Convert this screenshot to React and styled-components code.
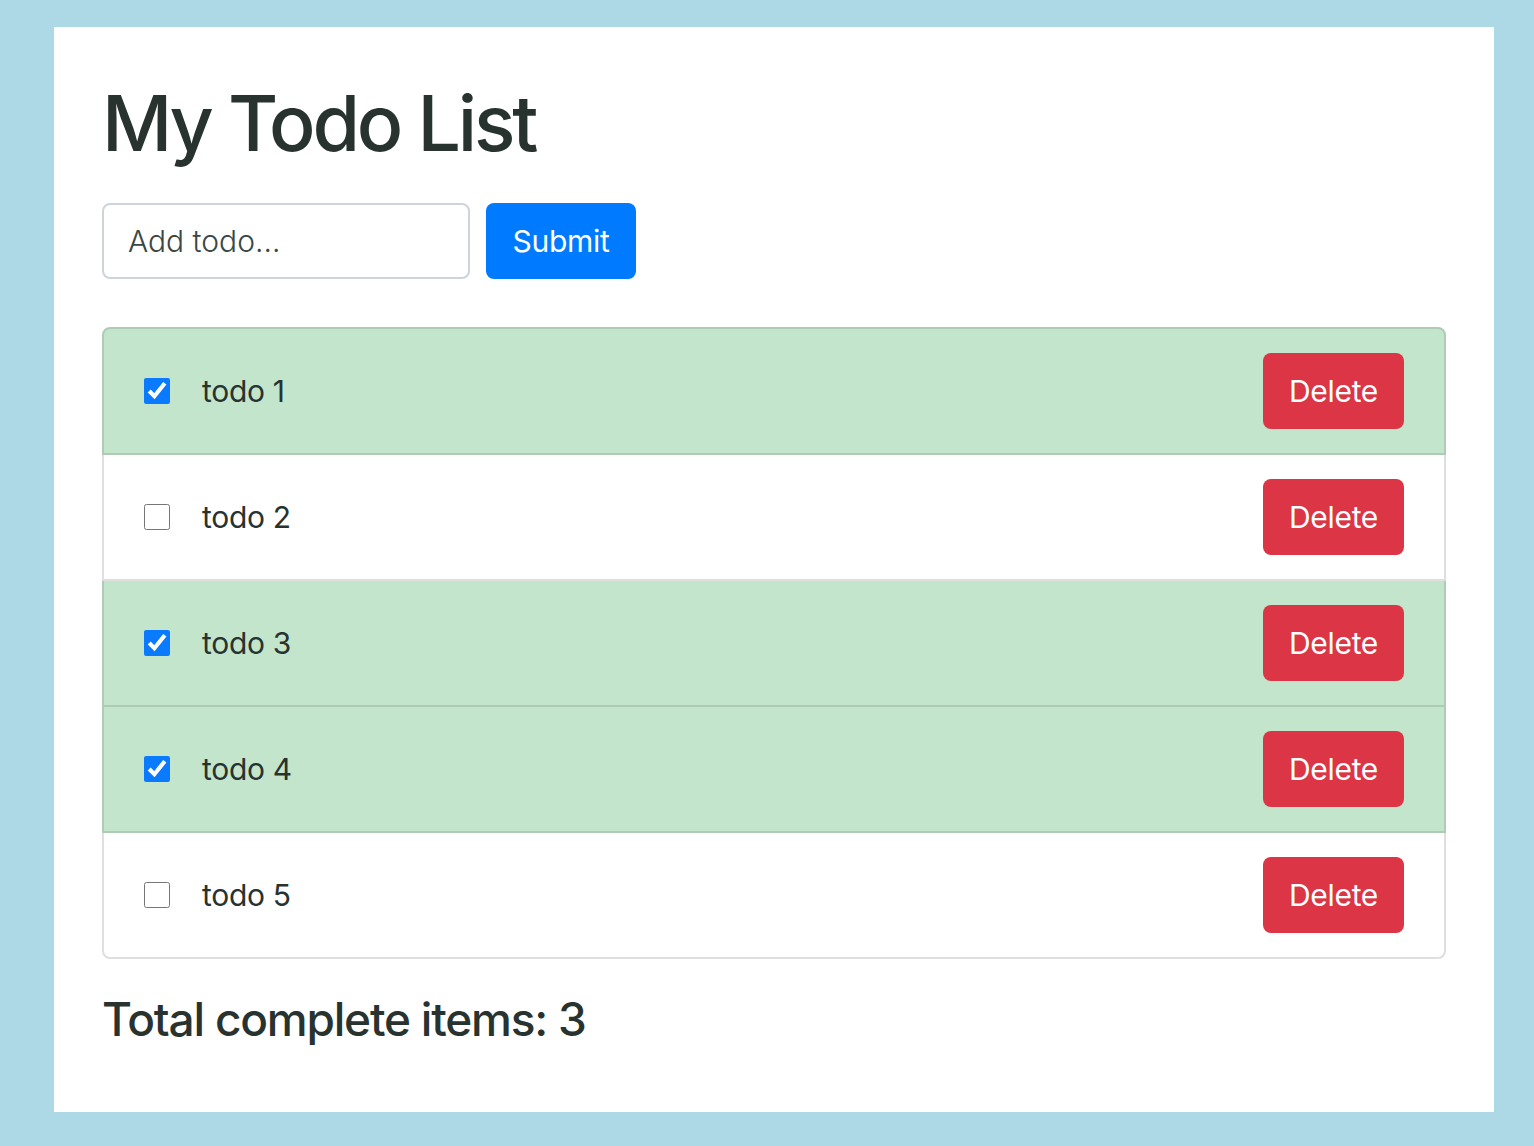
import React, { useState } from 'react'
import styled, { createGlobalStyle } from 'styled-components'

const GlobalStyle = createGlobalStyle`
  html, body {
    margin: 0;
    padding: 0;
    background: #add8e6;
    min-height: 100%;
  }
  body {
    font-family: Inter, "Liberation Sans", Arial, sans-serif;
    color: #283330;
  }
  * {
    box-sizing: border-box;
  }
`

const Page = styled.div`
  min-height: 1146px;
  padding: 27px 40px 35px 54px;
`

const Card = styled.div`
  background: #fff;
  width: 1440px;
  padding: 48px;
`

const Title = styled.h1`
  margin: 0 0 32px;
  font-size: 77px;
  line-height: 96px;
  font-weight: 500;
  letter-spacing: -3.2px;
  color: #283330;
`

const Form = styled.form`
  display: flex;
  gap: 16px;
  margin-bottom: 48px;
`

const Input = styled.input`
  width: 368px;
  height: 76px;
  padding: 12px 24px;
  border: 2px solid #ced4da;
  border-radius: 8px;
  font-family: inherit;
  font-size: 30px;
  font-weight: 300;
  color: #2d3833;
  outline: none;

  &::placeholder {
    color: #3b4742;
  }
`

const Button = styled.button`
  height: 76px;
  padding: 0 24px;
  border: none;
  border-radius: 8px;
  background: ${p => (p.$variant === 'danger' ? '#dc3545' : '#007bff')};
  color: #fff;
  font-family: inherit;
  font-size: 30px;
  font-weight: 400;
  letter-spacing: -0.3px;
  cursor: pointer;
  min-width: ${p => (p.$variant === 'danger' ? '141px' : '150px')};
`

const List = styled.ul`
  list-style: none;
  margin: 0 0 31px;
  padding: 0;
`

const Item = styled.li`
  display: flex;
  align-items: center;
  padding: 24px 40px;
  background: ${p => (p.$done ? '#c3e5cb' : '#fff')};
  border: 2px solid ${p => (p.$done ? '#afcab5' : '#e0dede')};

  & + & {
    border-top-width: 0;
  }
  &:first-child {
    border-radius: 8px 8px 0 0;
  }
  &:last-child {
    border-radius: 0 0 8px 8px;
  }
`

const Check = styled.input`
  width: 26px;
  height: 26px;
  margin: 0 32px 0 0;
  accent-color: #0a7aff;
  cursor: pointer;
`

const Label = styled.span`
  flex: 1;
  font-size: 30px;
  font-weight: 400;
  letter-spacing: -0.3px;
  color: #283330;
`

const Total = styled.h4`
  margin: 0 0 16px;
  font-size: 46px;
  line-height: 58px;
  font-weight: 500;
  letter-spacing: -1.2px;
  color: #283330;
`

const initial = [
  { id: 1, text: 'todo 1', done: true },
  { id: 2, text: 'todo 2', done: false },
  { id: 3, text: 'todo 3', done: true },
  { id: 4, text: 'todo 4', done: true },
  { id: 5, text: 'todo 5', done: false },
]

export default function App() {
  const [todos, setTodos] = useState(initial)
  const [text, setText] = useState('')

  const toggle = id =>
    setTodos(todos.map(t => (t.id === id ? { ...t, done: !t.done } : t)))
  const remove = id => setTodos(todos.filter(t => t.id !== id))
  const submit = e => {
    e.preventDefault()
    if (!text.trim()) return
    setTodos([...todos, { id: Date.now(), text, done: false }])
    setText('')
  }

  return (
    <>
      <GlobalStyle />
      <Page>
        <Card>
          <Title>My Todo List</Title>
          <Form onSubmit={submit}>
            <Input
              placeholder="Add todo..."
              value={text}
              onChange={e => setText(e.target.value)}
            />
            <Button type="submit">Submit</Button>
          </Form>
          <List>
            {todos.map(t => (
              <Item key={t.id} $done={t.done}>
                <Check type="checkbox" checked={t.done} onChange={() => toggle(t.id)} />
                <Label>{t.text}</Label>
                <Button type="button" $variant="danger" onClick={() => remove(t.id)}>
                  Delete
                </Button>
              </Item>
            ))}
          </List>
          <Total>Total complete items: {todos.filter(t => t.done).length}</Total>
        </Card>
      </Page>
    </>
  )
}
